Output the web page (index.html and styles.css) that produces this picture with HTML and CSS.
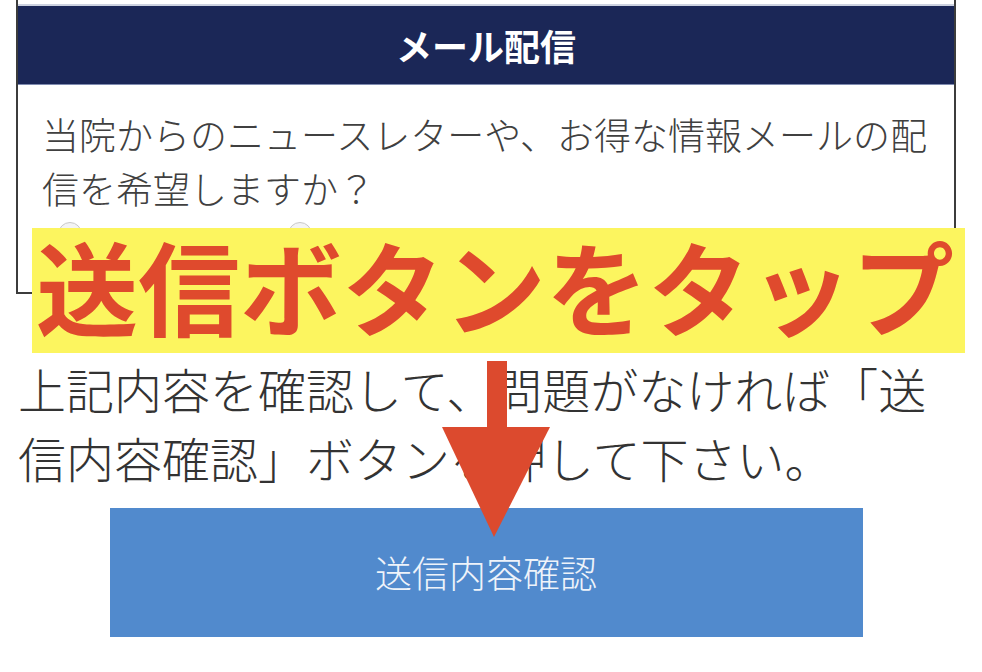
FILE: index.html
```html
<!DOCTYPE html>
<html lang="ja">
<head>
<meta charset="utf-8">
<title>メール配信</title>
<link rel="stylesheet" href="styles.css">
</head>
<body>
<div class="page">
  <section class="form-box">
    <div class="prev-tail"></div>
    <h2 class="section-head">メール配信</h2>
    <div class="section-body">
      <p class="question">当院からのニュースレターや、お得な情報メールの配信を希望しますか？</p>
      <div class="radio-row">
        <span class="radio-dot"></span>
        <span class="radio-dot"></span>
      </div>
    </div>
  </section>

  <p class="notice">上記内容を確認して、問題がなければ「送信内容確認」ボタンを押して下さい。</p>

  <div class="submit-btn">送信内容確認</div>

  <div class="callout">送信ボタンをタップ</div>

  <svg class="arrow" width="108" height="176" viewBox="0 0 108 176">
    <rect x="45" y="0" width="20" height="70" fill="#dc4a2e"/>
    <polygon points="0,66 108,66 52,176" fill="#dc4a2e"/>
  </svg>
</div>
</body>
</html>
```
FILE: styles.css
```css
html, body {
  margin: 0;
  padding: 0;
  background: #ffffff;
}

body {
  font-family: "Noto Sans CJK JP", "Noto Sans", sans-serif;
  color: #333333;
}

.page {
  position: relative;
  width: 972px;
}

.form-box {
  margin: 0 16px;
  border-left: 2px solid #3c3c3c;
  border-right: 2px solid #3c3c3c;
  border-bottom: 2px solid #3c3c3c;
}

.prev-tail {
  height: 4px;
  border-bottom: 2px solid #cdd2e0;
}

.section-head {
  margin: 0;
  height: 78px;
  background: #1b2757;
  border-bottom: 1px solid #7f8bb0;
  color: #ffffff;
  font-size: 36px;
  font-weight: 700;
  line-height: 78px;
  text-align: center;
}

.section-body {
  padding: 22px 20px 16px 24px;
}

.question {
  margin: 0;
  font-size: 37px;
  font-weight: 300;
  line-height: 54px;
  color: #404040;
}

.radio-row {
  display: flex;
  gap: 206px;
  margin-top: 7px;
  padding-left: 16px;
  height: 54px;
}

.radio-dot {
  width: 22px;
  height: 22px;
  border: 1px solid #c9c9c9;
  border-radius: 50%;
  background: #f3f3f3;
}

.notice {
  margin: 60px 0 0 18px;
  width: 944px;
  font-size: 48px;
  font-weight: 300;
  line-height: 69px;
  color: #333333;
}

.submit-btn {
  margin: 16px auto 0;
  width: 753px;
  height: 129px;
  background: #518acd;
  color: #eef3fa;
  font-size: 37px;
  font-weight: 300;
  line-height: 129px;
  text-align: center;
}

.callout {
  position: absolute;
  left: 32px;
  top: 228px;
  width: 929px;
  height: 113px;
  padding: 0 0 12px 4px;
  background: #fcf55f;
  color: #df4a2d;
  font-size: 102px;
  font-weight: 600;
  line-height: 113px;
  white-space: nowrap;
}

.arrow {
  position: absolute;
  left: 442px;
  top: 361px;
}
```
